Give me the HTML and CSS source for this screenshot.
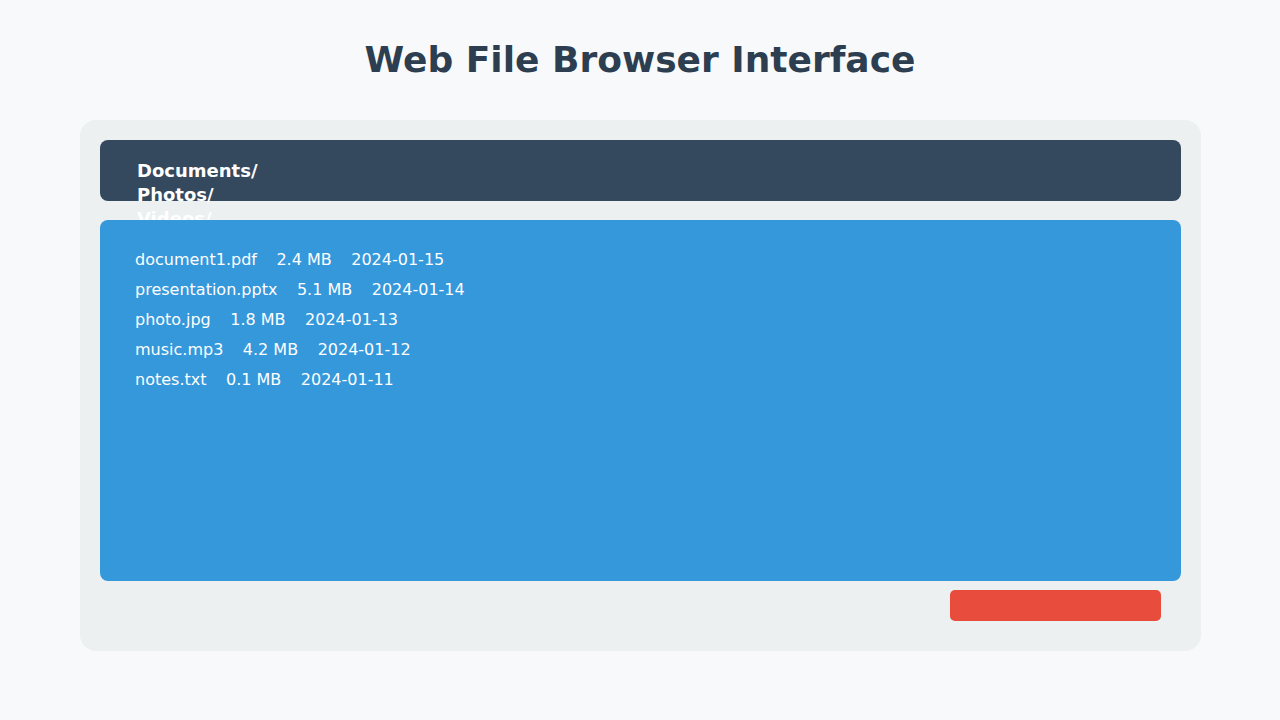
FILE: index.html
```html
<!DOCTYPE html>
<html lang="en">
<head>
<meta charset="utf-8">
<title>Web File Browser Interface</title>
<link rel="stylesheet" href="styles.css">
</head>
<body>
  <header class="page-head">
    <h1 class="title">Web File Browser Interface</h1>
  </header>
  <main class="browser">
    <nav class="folders">
      <div class="folder">Documents/</div>
      <div class="folder">Photos/</div>
      <div class="folder">Videos/</div>
    </nav>
    <section class="files">
      <div class="file"><span>document1.pdf</span><span>2.4 MB</span><span>2024-01-15</span></div>
      <div class="file"><span>presentation.pptx</span><span>5.1 MB</span><span>2024-01-14</span></div>
      <div class="file"><span>photo.jpg</span><span>1.8 MB</span><span>2024-01-13</span></div>
      <div class="file"><span>music.mp3</span><span>4.2 MB</span><span>2024-01-12</span></div>
      <div class="file"><span>notes.txt</span><span>0.1 MB</span><span>2024-01-11</span></div>
    </section>
    <div class="actions">
      <button class="action-btn" type="button"></button>
    </div>
  </main>
</body>
</html>
```

FILE: styles.css
```css
* {
  box-sizing: border-box;
}

body {
  margin: 0;
  background: #f8f9fa;
  font-family: "DejaVu Sans", "Liberation Sans", sans-serif;
  color: #2c3e50;
}

.page-head {
  height: 120px;
  display: flex;
  align-items: center;
  justify-content: center;
}

.title {
  margin: 0;
  font-size: 36px;
  font-weight: bold;
  color: #2c3e50;
  line-height: 42px;
}

.browser {
  margin: 0 80px;
  width: 1121px;
  background: #ecf0f1;
  border-radius: 16px;
  padding: 20px 20px 20px 20px;
}

.folders {
  height: 61px;
  background: #34495e;
  border-radius: 8px;
  padding: 19px 37px 0;
  color: #ffffff;
  font-size: 18px;
  font-weight: bold;
  line-height: 24px;
}

.files {
  position: relative;
  margin-top: 19px;
  height: 361px;
  background: #3498db;
  border-radius: 8px;
  padding: 25px 35px;
  color: #ffffff;
  font-size: 16px;
}

.file {
  display: flex;
  gap: 19.5px;
  line-height: 30px;
}

.actions {
  display: flex;
  justify-content: flex-end;
  margin-top: 9px;
  margin-bottom: 10px;
  padding-right: 20px;
}

.action-btn {
  width: 211px;
  height: 31px;
  border: none;
  border-radius: 5px;
  background: #e74c3c;
  padding: 0;
}
```
